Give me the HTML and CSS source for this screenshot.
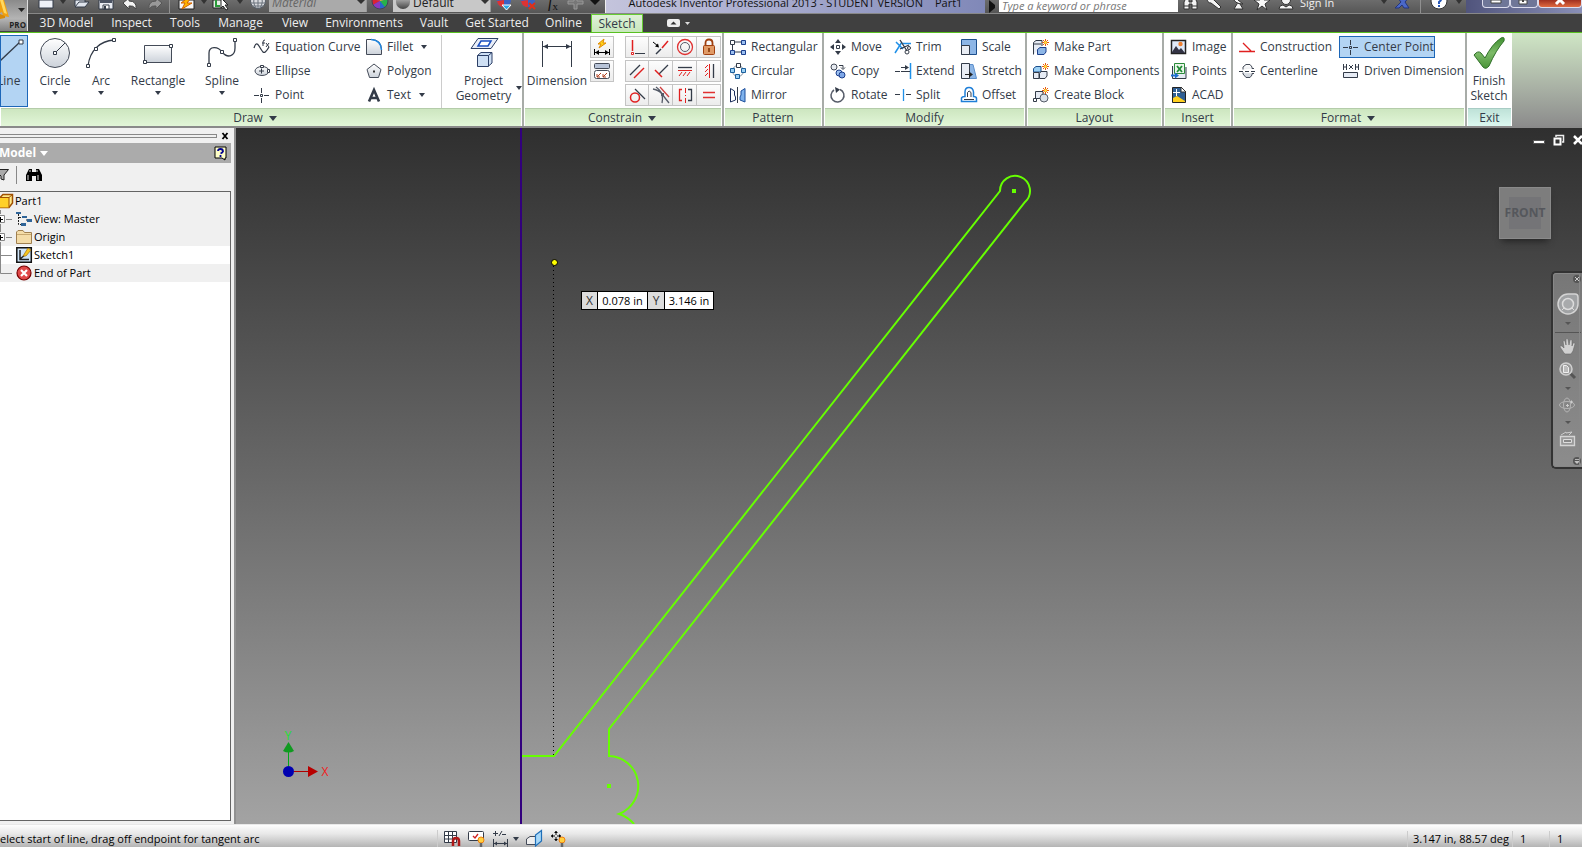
FILE: index.html
```html
<!DOCTYPE html>
<html lang="en">
<head>
<meta charset="utf-8">
<title>Autodesk Inventor Professional 2013 - STUDENT VERSION Part1</title>
<link rel="stylesheet" href="styles.css">
</head>
<body>
<div class="app">
<header class="header">
  <button class="logo" aria-label="Application menu">
    <svg width="28" height="31" viewBox="0 0 28 31"><path d="M0 0H4L9 17L3 16L2 12L0 13Z" fill="#f0a010"/><path d="M0 0H3L7 14L4 13Z" fill="#ffd860"/><path d="M0 14L5 16V18L0 19Z" fill="#d88a08"/><path d="M18 8h7l-3.500 4z" fill="#222"/></svg>
    <span class="pro">PRO</span>
  </button>
  <div class="titlebar">
    <div class="quick">
      <button class="q q20" aria-label="New"><svg width="16" height="9"><path d="M1 0H15V8H1Z" fill="#eef1f7" stroke="#333b48"/></svg></button>
      <button class="q q14 menu" aria-label="New options"></button>
      <button class="q q24" aria-label="Open"><svg width="18" height="9"><path d="M2 7L6 2H16L12 7ZM2 6V0H12V2" fill="#dfe4ec" stroke="#333b48"/></svg></button>
      <button class="q q24" aria-label="Save"><svg width="16" height="10"><path d="M1 0H15V9H1Z" fill="#e8ebf2" stroke="#333b48"/><path d="M2 0H14V3H2Z" fill="#4a5262"/><path d="M5 5H11V9H5Z" fill="#fff" stroke="#333b48"/><path d="M6 6h2v3h-2z" fill="#333b48"/></svg></button>
      <button class="q q24" aria-label="Undo"><svg width="17" height="10"><path d="M1 3L7-2V1Q15 1 14 9Q11 5 7 6V9Z" fill="#f4f4f4" stroke="#444"/></svg></button>
      <button class="q q24" aria-label="Redo"><svg width="17" height="10"><path d="M16 3L10-2V1Q2 1 3 9Q6 5 10 6V9Z" fill="#999" stroke="#555"/></svg></button>
      <span class="qsep"></span>
      <button class="q q26" aria-label="Update"><svg width="17" height="11"><path d="M1 0H16V9H1Z" fill="#f6f6f6" stroke="#222"/><path d="M11-3L3 3H7L4 9L14 3H9L13-2Z" fill="#ffb400" stroke="#d06000"/></svg></button>
      <button class="q q10 menu" aria-label="Update options"></button>
      <button class="q q24" aria-label="Select"><svg width="18" height="11"><path d="M1 0H12V8H1Z" fill="#e8eee8" stroke="#222"/><path d="M4 0V6H8" fill="none" stroke="#2a9a3a" stroke-width="2"/><path d="M9-2V8L11 6L14 10L16 9L13 5H16Z" fill="#fff" stroke="#222"/></svg></button>
      <button class="q q14 menu" aria-label="Select options"></button>
      <button class="q q22" aria-label="Appearance"><svg width="17" height="11"><circle cx="8" cy="1" r="7.500" fill="#d8dade" stroke="#555d66"/><path d="M1 3H15M3 6H13M5-4Q2 2 6 8M11-4Q14 2 10 8M8-5V8" stroke="#6a727c" fill="none"/></svg></button>
      <div class="combo dim"><select aria-label="Material"><option>Material</option></select><span class="tri"></span></div>
      <button class="q q26" aria-label="Color wheel"><svg width="18" height="11"><circle cx="9" cy="1" r="8" fill="#2a66cc"/><path d="M9 1L1 0A8 8 0 0 1 9-7Z" fill="#e43"/><path d="M9 1L2 5A8 8 0 0 1 1-1Z" fill="#d23"/><path d="M9 1L2 5Q5 9 9 9Z" fill="#8a3ac0"/><path d="M9 1L17-1Q17 5 14 7Z" fill="#27b24a"/><path d="M9 1L10-7Q16-5 17-1Z" fill="#f5b820"/><circle cx="9" cy="1" r="8" fill="none" stroke="#445"/></svg></button>
      <div class="combo"><i class="ball"></i><select aria-label="Appearance"><option>Default</option></select><span class="tri"></span></div>
      <button class="q q26" aria-label="Adjust"><svg width="17" height="11"><circle cx="8" cy="0" r="7" fill="#3b62c4"/><path d="M8 0L1 1Q2 7 8 7Z" fill="#d33"/><path d="M6 5H15L10.500 10Z" fill="#28a8e8" stroke="#fff"/></svg></button>
      <button class="q q24" aria-label="Clear"><svg width="18" height="11"><circle cx="8" cy="0" r="7" fill="#3b62c4"/><path d="M8 0L1 1Q2 7 8 7Z" fill="#d33"/><path d="M9 3L15 9M15 3L9 9" stroke="#e03018" stroke-width="2"/></svg></button>
      <button class="q q24 fx" aria-label="Parameters"><i>f</i><sub>x</sub></button>
      <button class="q q20" aria-label="Add"><svg width="17" height="10"><path d="M7-5H10V1H16V4H10V9H7V4H1V1H7Z" fill="#777" stroke="#999"/></svg></button>
      <button class="q q20 menu dark" aria-label="Customize"></button>
    </div>
    <div class="apptitle"><span>Autodesk Inventor Professional 2013 - STUDENT VERSION</span><span>Part1</span></div>
    <button class="play" aria-label="Search options"></button>
    <input class="search" aria-label="Search" placeholder="Type a keyword or phrase">
    <div class="info">
      <button class="q q24" aria-label="Search help"><svg width="17" height="11"><path d="M2 9V2L4-2H7V2H10V-2H13L15 2V9H10V4H7V9Z" fill="#f4f4f4" stroke="#333"/><path d="M2 6h5M10 6h5" stroke="#333"/></svg></button>
      <button class="q q24" aria-label="Subscription"><svg width="17" height="11"><path d="M1-2Q5-4 8 0L15 7L13 9L5 3Q1 3 1-2Z" fill="#f4f4f4" stroke="#333"/></svg></button>
      <button class="q q24" aria-label="Communication"><svg width="17" height="11"><path d="M3-3Q4 4 13 4L8 0L12-3M7 4L4 9H13L10 4" fill="#f4f4f4" stroke="#333"/></svg></button>
      <button class="q q24" aria-label="Favorites"><svg width="17" height="11"><path d="M8-6L10 0H16L11 4L13 10L8 6L3 10L5 4L0 0H6Z" fill="#f8f8f8" stroke="#333"/></svg></button>
      <button class="q q24" aria-label="Account"><svg width="17" height="11"><circle cx="8" cy="0" r="4.500" fill="#f4f4f4" stroke="#333"/><path d="M1 9Q1 5 5 5L8 7L11 5Q15 5 15 9Z" fill="#f4f4f4" stroke="#333"/></svg></button>
      <button class="signin">Sign In</button>
      <button class="q q14 menu" aria-label="Sign in options"></button>
      <button class="q q24" aria-label="Exchange apps"><svg width="17" height="11"><path d="M1-4H6L8-1L11-4H15L10 2L14 8H9L7 5L4 8H0L6 2Z" fill="#4a68c8" stroke="#24357a"/></svg></button>
      <span class="qsep wide"></span>
      <button class="q q26" aria-label="Help"><svg width="18" height="12"><circle cx="9" cy="1" r="8" fill="#fff" stroke="#333"/><path d="M6-1Q7-4 10-3Q13-1 9 2V4M9 5V7" fill="none" stroke="#2455b8" stroke-width="2"/></svg></button>
      <button class="q q14 menu" aria-label="Help options"></button>
    </div>
    <div class="winbtns">
      <button aria-label="Minimize"><svg width="12" height="5"><path d="M1 0h10v3H1z" fill="#fff" stroke="#444"/></svg></button>
      <button aria-label="Restore"><svg width="12" height="6"><path d="M1 0h8v4H1z" fill="#fff" stroke="#444"/><path d="M4 0h2v2H4z" fill="#444"/></svg></button>
      <button class="close" aria-label="Close"><svg width="12" height="6"><path d="M2 4L6 0M10 4L6 0" stroke="#fff" stroke-width="3"/></svg></button>
    </div>
  </div>
  <nav class="tabs">
    <button>3D Model</button><button>Inspect</button><button>Tools</button><button>Manage</button><button>View</button><button>Environments</button><button>Vault</button><button>Get Started</button><button>Online</button><button class="active">Sketch</button>
    <button class="collapse" aria-label="Minimize ribbon"><svg width="30" height="10"><rect x="4" y="1" width="13" height="8" rx="2" fill="#eee"/><path d="M7.500 6.500h6l-3-3z" fill="#333"/><path d="M22 4h5l-2.500 3z" fill="#ddd"/></svg></button>
  </nav>
</header>

<div class="ribbon">
  <section class="panel draw">
    <div class="pbody">
      <button class="big line on"><svg width="28" height="34"><path d="M0 25L20 6" stroke="#333b48" stroke-width="1.300"/><path d="M19 4h4v4h-4z" fill="#fff" stroke="#333b48"/></svg><span>Line</span></button>
      <button class="big circle drop"><svg width="32" height="34"><defs><linearGradient id="g" x2="0" y2="1"><stop stop-color="#fff"/><stop offset="1" stop-color="#ccd2da"/></linearGradient></defs><circle cx="16" cy="17" r="14.500" fill="url(#g)" stroke="#444b58"/><path d="M16 17L26 7" stroke="#333b48"/><path d="M14.500 15.500h3v3h-3z" fill="#fff" stroke="#333b48"/></svg><span>Circle</span></button>
      <button class="big arc drop"><svg width="34" height="34"><path d="M4 30C6 14 16 5 30 4" fill="none" stroke="#333b48" stroke-width="1.300"/><path d="M2.500 28.500h3v3h-3zM10.500 11.500h3v3h-3zM28.500 2.500h3v3h-3z" fill="#fff" stroke="#333b48"/></svg><span>Arc</span></button>
      <button class="big rect drop"><svg width="32" height="34"><path d="M2.500 9.500h27v17h-27z" fill="url(#g)" stroke="#444b58"/><path d="M1.500 24.500h3v3h-3zM27.500 8.500h3v3h-3z" fill="#fff" stroke="#333b48"/></svg><span>Rectangle</span></button>
      <button class="big spline drop"><svg width="34" height="34"><path d="M4 28V17C4 10 13 10 17 16C23 23 30 20 30 12V5" fill="none" stroke="#333b48" stroke-width="1.300"/><path d="M2.500 27.500h3v3h-3zM15.500 14.500h3v3h-3zM28.500 2.500h3v3h-3z" fill="#fff" stroke="#333b48"/></svg><span>Spline</span></button>
      <div class="list eq">
        <button><svg width="16" height="16"><path d="M0 9Q2 2 5 7T9 13Q11 15 15 8" fill="none" stroke="#333b48" stroke-width="1.300"/><path d="M9 7V3Q9 1 11 1M8 4H11M12 4L15 8M15 4L12 8" fill="none" stroke="#333b48"/></svg>Equation Curve</button>
        <button><svg width="16" height="16"><ellipse cx="8" cy="8" rx="7" ry="4.500" fill="url(#g)" stroke="#444b58"/><path d="M5 8h5M7.500 5.500v5" stroke="#333b48"/><path d="M6.500 2.500h3v2h-3zM13.500 6.500h2v3h-2z" fill="#fff" stroke="#333b48"/></svg>Ellipse</button>
        <button><svg width="16" height="16"><path d="M0 8.500h5M10 8.500h5M7.500 1v5M7.500 11v5M6.500 7.500h2v2h-2z" fill="none" stroke="#333b48"/></svg>Point</button>
      </div>
      <div class="list fil">
        <button class="dd"><svg width="16" height="16"><path d="M.5 15.500V.5H6Q15 1 15.500 10V15.500Z" fill="url(#g)" stroke="#444b58"/><path d="M5 .5Q15 1 15.500 11" fill="none" stroke="#1f86e0" stroke-width="1.500"/></svg>Fillet</button>
        <button><svg width="16" height="16"><path d="M8 1L15 6.500L12.500 14.500H3.500L1 6.500Z" fill="url(#g)" stroke="#444b58"/><path d="M7 7.500h2v2H7z" fill="#333"/></svg>Polygon</button>
        <button class="dd"><svg width="16" height="16"><path d="M3 14.500L8 3L13 14.500M5 11H11" fill="none" stroke="#333b48" stroke-width="2.600"/></svg>Text</button>
      </div>
      <button class="big project"><svg width="32" height="34"><path d="M3 12.500L10 2.500H30L23 12.500Z" fill="#e9eef8" stroke="#2c3f66"/><path d="M10 10L13 5H23L20 10Z" fill="#fff" stroke="#1a4fc0" stroke-width="1.500"/><path d="M9.500 19.500L13 16.500H24V27L20 30.500H9.500ZM9.500 19.500H20.500V30.500M20.500 19.500L24 16.500" fill="#cfe0f4" stroke="#2c3f66"/></svg><span>Project<br>Geometry</span></button>
    </div>
    <h2 class="more">Draw</h2>
  </section>

  <section class="panel constrain">
    <div class="pbody">
      <button class="big dimension"><svg width="32" height="34"><path d="M1.500 5V31M30.500 5V31M2 10.500H30" stroke="#333b48"/><path d="M2 10.500l5-2.500v5zM30 10.500l-5-2.500v5z" fill="#333b48"/></svg><span>Dimension</span></button>
      <div class="boxes one">
        <button aria-label="Auto dimension"><svg width="18" height="18"><path d="M11 1L5 6H8L6 10L13 5H10Z" fill="#ffd21a" stroke="#e08a00"/><path d="M1.500 11v6M16.500 11v6M2 14.500h14" stroke="#000"/><path d="M2 14.500l4-2.500v5zM16 14.500l-4-2.500v5z" fill="#000"/></svg></button>
        <button aria-label="Show constraints"><svg width="18" height="18"><rect x="1.500" y="1.500" width="15" height="5" rx="1" fill="#b8c4d8" stroke="#444b58"/><rect x="1.500" y="8.500" width="15" height="8" rx="2" fill="#fff" stroke="#444b58"/><path d="M4 15L8 11M4 12v3h3M10 15L14 11M10 12v3h3" stroke="#b04020" fill="none"/></svg></button>
      </div>
      <div class="boxes four">
        <button aria-label="Coincident"><svg width="18" height="18"><path d="M4.500 2v11" stroke="#e02020" stroke-width="1.500"/><path d="M7 15.500h10" stroke="#333b48"/><path d="M3.500 14.500h2v2h-2z" fill="#fff" stroke="#e02020"/></svg></button>
        <button aria-label="Collinear"><svg width="18" height="18"><path d="M4 16L9 11" stroke="#333b48" stroke-width="1.500"/><path d="M10 10L16 3" stroke="#e02020" stroke-width="1.500"/><path d="M1 4L6 8" stroke="#000"/><path d="M7 9.500L3 8.500L6 5.500Z"/></svg></button>
        <button aria-label="Concentric"><svg width="18" height="18"><circle cx="9" cy="9" r="7.500" fill="none" stroke="#e03030" stroke-width="1.300"/><circle cx="9" cy="9" r="4.500" fill="none" stroke="#555b68"/></svg></button>
        <button aria-label="Fix"><svg width="18" height="18"><path d="M5.500 8V5Q5.500 1.500 9 1.500T12.500 5V8" fill="none" stroke="#a04010" stroke-width="1.800"/><rect x="3.500" y="7.500" width="11" height="9" rx="1" fill="#e09a66" stroke="#a04010"/><path d="M9 10v4" stroke="#803000" stroke-width="1.500"/></svg></button>
        <button aria-label="Parallel"><svg width="18" height="18"><path d="M2 13L12 3" stroke="#333b48" stroke-width="1.300"/><path d="M6 16L16 6" stroke="#e02020" stroke-width="1.500"/></svg></button>
        <button aria-label="Perpendicular"><svg width="18" height="18"><path d="M7 12L16 3" stroke="#333b48" stroke-width="1.300"/><path d="M3 8L10 15" stroke="#e02020" stroke-width="1.500"/></svg></button>
        <button aria-label="Horizontal"><svg width="18" height="18"><path d="M2 5.500h14" stroke="#333b48" stroke-width="1.300"/><path d="M2 8.500h14M6 10l-3 4M10 10l-3 4M14 10l-3 4" stroke="#e02020"/></svg></button>
        <button aria-label="Vertical"><svg width="18" height="18"><path d="M13.500 2v14" stroke="#333b48" stroke-width="1.300"/><path d="M9.500 2v14M8 3l-3 3M8 7l-3 3M8 11l-3 3" stroke="#e02020"/></svg></button>
        <button aria-label="Tangent"><svg width="18" height="18"><circle cx="7" cy="11.500" r="4.500" fill="none" stroke="#e02020" stroke-width="1.500"/><path d="M7 3L17 13" stroke="#333b48" stroke-width="1.300"/></svg></button>
        <button aria-label="Smooth"><svg width="18" height="18"><path d="M1 3Q7 4 10 8T17 17M4 1Q9 5 10 8Q11 13 10 17" fill="none" stroke="#555b68" stroke-width="1.300"/><path d="M8 1L17 11" fill="none" stroke="#d04040" stroke-width="1.300"/><path d="M9 7h3v3H9z" fill="#555b68"/></svg></button>
        <button aria-label="Symmetric"><svg width="18" height="18"><path d="M6 3.500H3.500V14.500H6" fill="none" stroke="#e02020" stroke-width="1.300"/><path d="M9.500 2V7M9.500 9V10M9.500 12V17" stroke="#e02020"/><path d="M12 3.500H15.500V14.500H12" fill="none" stroke="#333b48" stroke-width="1.300"/></svg></button>
        <button aria-label="Equal"><svg width="18" height="18"><path d="M3 6.500h12M3 11.500h12" stroke="#e03030" stroke-width="1.300"/></svg></button>
      </div>
    </div>
    <h2 class="more">Constrain</h2>
  </section>

  <section class="panel pattern">
    <div class="pbody"><div class="list">
      <button><svg width="16" height="16"><path d="M5 3h6M2.500 5v6M5 13h6" stroke="#333b48"/><path d="M.5 1.500h4v4h-4z" fill="#fff" stroke="#333b48"/><path d="M11.500 1.500h4v4h-4zM.5 11.500h4v4h-4zM11.500 11.500h4v4h-4z" fill="#9cc0f0" stroke="#1c3f8c"/></svg>Rectangular</button>
      <button><svg width="16" height="16"><circle cx="8" cy="8" r="5.500" fill="none" stroke="#8090a0"/><path d="M6.500.5h4v4h-4z" fill="#fff" stroke="#333b48"/><path d="M.5 5.500h4v4h-4zM11.500 5.500h4v4h-4zM5.500 11.500h4v4h-4z" fill="#9cd0f4" stroke="#1c5f9c"/></svg>Circular</button>
      <button><svg width="16" height="16"><path d="M.5 15V1.500L4.500 4V8L5.500 10V13Z" fill="#fff" stroke="#1c2f5c"/><path d="M7.500 0V16" stroke="#333b48"/><path d="M15 15V1.500L11 4V8L10 10V13Z" fill="#7fb2ec" stroke="#1c4f9c"/></svg>Mirror</button>
    </div></div>
    <h2>Pattern</h2>
  </section>

  <section class="panel modify">
    <div class="pbody">
      <div class="list">
        <button><svg width="16" height="16"><path d="M8 0l3 4H5zM8 16l3-4H5zM0 8l4-3v6zM16 8l-4-3v6z" fill="#333b48"/><path d="M6.500 6.500h3v3h-3z" fill="#fff" stroke="#333b48"/></svg>Move</button>
        <button><svg width="16" height="16"><circle cx="4" cy="4" r="3" fill="#e6eaf0" stroke="#444b58"/><circle cx="9" cy="10" r="3" fill="#9cc0f0" stroke="#1c3f8c"/><circle cx="12" cy="12" r="3" fill="#7fa8e8" stroke="#1c3f8c"/><path d="M9 2.500h4v3M11 4.500l2 2 2-2" fill="none" stroke="#333b48"/></svg>Copy</button>
        <button><svg width="16" height="16"><path d="M10 2.500A6.500 6.500 0 1 1 4 3" fill="none" stroke="#555b68" stroke-width="1.500"/><path d="M5 0L10 2.500L6 6Z" fill="#333b48"/></svg>Rotate</button>
      </div>
      <div class="list">
        <button><svg width="16" height="16"><path d="M0 14L7 3M1 3L8 10M8 4.500H16" stroke="#1f90e8" stroke-width="1.500"/><path d="M5 1L12 12M14 6L5 10" stroke="#333b48" stroke-width="1.300"/><circle cx="12" cy="13" r="2" fill="none" stroke="#333b48"/><circle cx="14" cy="9" r="1.500" fill="none" stroke="#333b48"/></svg>Trim</button>
        <button><svg width="16" height="16"><path d="M15.500 0V16" stroke="#1f90e8" stroke-width="1.500"/><path d="M0 8.500h5M6 8.500h9M6 4.500h7" stroke="#333b48"/><path d="M14 4.500L10 2v5z" fill="#333b48"/></svg>Extend</button>
        <button><svg width="16" height="16"><path d="M0 7.500h5M11 7.500h5" stroke="#333b48"/><path d="M8.500 2v12" stroke="#1f90e8" stroke-width="1.300"/></svg>Split</button>
      </div>
      <div class="list">
        <button><svg width="16" height="16"><path d="M.5.5h15v15h-15z" fill="#8db6e6" stroke="#1c4f8c"/><path d="M.5 6.500h8v9h-8z" fill="#e9edf4" stroke="#333b48"/></svg>Scale</button>
        <button><svg width="16" height="16"><path d="M8 1.500h4L15.500 15.500H8z" fill="#8db6e6" stroke="#5c8fcc"/><path d="M.5.500h8v15h-8z" fill="#e9edf4" stroke="#333b48"/><path d="M4 11.500h6" stroke="#222"/><path d="M12 11.500L8 8.500v6z" fill="#222"/></svg>Stretch</button>
        <button><svg width="16" height="16"><path d="M.5 14.500V11Q1 9.500 4 9.500V5Q4 .5 8 .5T12.500 5V9.500Q15.500 9.500 15.500 11.500V14.500Z" fill="#fff" stroke="#1f7fd8" stroke-width="1.500"/><path d="M3 12.500H13M6.500 10V5.500Q8 2.500 10 5.500V10" fill="none" stroke="#333b48"/></svg>Offset</button>
      </div>
    </div>
    <h2>Modify</h2>
  </section>

  <section class="panel layout">
    <div class="pbody"><div class="list">
      <button><svg width="16" height="16"><path d="M.5 15.500V3.500L3 1.500H9V7M.5 5H8" fill="#e6ebf4" stroke="#333b48"/><path d="M4.500 10.500L7 8.500H13V13L11 15.500H4.500Z" fill="#8db6e6" stroke="#1c3f8c"/><path d="M12.500 0v7M9 3.500h7M10 1l5 5M15 1l-5 5" stroke="#e85a10"/><circle cx="12.500" cy="3.500" r="1.500" fill="#ffe040"/></svg>Make Part</button>
      <button><svg width="16" height="16"><path d="M.5 5.500L3 3.500H8V9H.5Z" fill="#9cd0f4" stroke="#1c4f8c"/><path d="M.5 9.500H6V15.500H.5Z" fill="#e6ebf4" stroke="#333b48"/><path d="M6.500 10.500L8 8.500H14V13L12 15.500H6.500Z" fill="#e6ebf4" stroke="#333b48"/><path d="M12.500 0v7M9 3.500h7M10 1l5 5M15 1l-5 5" stroke="#e85a10"/><circle cx="12.500" cy="3.500" r="1.500" fill="#ffe040"/></svg>Make Components</button>
      <button><svg width="16" height="16"><path d="M2.500 12V4.500H10V11.500H3" fill="#e6ebf4" stroke="#333b48"/><path d="M.5 11.500h3v3h-3z" fill="#fff" stroke="#333b48"/><circle cx="11" cy="11" r="4" fill="#dde2ea" stroke="#555b68"/><path d="M12.500 0v7M9 3.500h7M10 1l5 5M15 1l-5 5" stroke="#e85a10"/><circle cx="12.500" cy="3.500" r="1.500" fill="#ffe040"/></svg>Create Block</button>
    </div></div>
    <h2>Layout</h2>
  </section>

  <section class="panel insert">
    <div class="pbody"><div class="list">
      <button><svg width="16" height="16"><path d="M.5 1.500h14v13H.5z" fill="#dfe9f8" stroke="#222" stroke-width="1.500"/><circle cx="9.500" cy="5" r="2.200" fill="#f08030"/><path d="M1 13L5 7L8 11L10 9L14 14H1Z" fill="#334"/></svg>Image</button>
      <button><svg width="16" height="16"><path d="M1.500 3v12.500h13.500V4" fill="#e6ebf4" stroke="#333b48"/><path d="M3.500.5h10v10h-10z" fill="#eaf6ea" stroke="#2a8a3a"/><path d="M6 3l5 6M11 3l-5 6" stroke="#1f8a34" stroke-width="1.800"/><path d="M0 11.500h4v-2l4 3-4 3v-2H0z" fill="#1f70d0"/></svg>Points</button>
      <button><svg width="16" height="16"><path d="M1.500.5h9l4 4v11h-13z" fill="#2f5f94" stroke="#222"/><path d="M2 11L6 9L14 14V15H2Z" fill="#ffd020"/><path d="M10 0l5 5h-5z" fill="#fff" stroke="#333"/><path d="M5.500 2v7M2 5.500h7" stroke="#fff"/></svg>ACAD</button>
    </div></div>
    <h2>Insert</h2>
  </section>

  <section class="panel format">
    <div class="pbody">
      <div class="list">
        <button><svg width="16" height="16"><path d="M0 12.500h16M4 4l8 8" fill="none" stroke="#e02020" stroke-width="1.300"/></svg>Construction</button>
        <button><svg width="16" height="16"><path d="M4 6.500V4L7 1.500H11L13 4V5.500H15M4 9.500V11L7 14.500H11L13 12V10.500H15" fill="url(#g)" stroke="#444b58"/><path d="M0 8.500h4M6 8.500h4M12 8.500h4" stroke="#333b48"/></svg>Centerline</button>
      </div>
      <div class="list second">
        <button class="on"><svg width="16" height="16"><path d="M0 8.500h5M10 8.500h5M7.500 1v5M7.500 11v5M6.500 7.500h2v2h-2z" fill="none" stroke="#333b48"/></svg>Center Point</button>
        <button><svg width="16" height="16"><path d="M.5 1v6M.5 4h3M3.500 1v6M12.500 1v6M12.500 4h3M15.500 1v6M6 2l4 4M10 2l-4 4" fill="none" stroke="#333b48"/><path d="M.5 9.500h14v5H.5z" fill="#e6ebf4" stroke="#333b48"/></svg>Driven Dimension</button>
      </div>
    </div>
    <h2 class="more">Format</h2>
  </section>

  <section class="panel exit">
    <div class="pbody">
      <button class="big"><svg width="34" height="34"><defs><linearGradient id="k" x2="0" y2="1"><stop stop-color="#3f8f30"/><stop offset=".5" stop-color="#7dbb68"/><stop offset="1" stop-color="#4a9438"/></linearGradient></defs><path d="M2 19Q6 14 9 17L13 22Q20 8 29 2Q33 0 32 5Q24 14 17 30Q14 34 11 31Z" fill="url(#k)" stroke="#2f6f28"/></svg><span>Finish<br>Sketch</span></button>
    </div>
    <h2>Exit</h2>
  </section>
</div>

<main class="work">
  <aside class="browser">
    <div class="grip"><i></i><button aria-label="Close browser"><svg width="8" height="8"><path d="M1.500 1l5 6M6.500 1l-5 6" stroke="#000" stroke-width="1.800"/></svg></button></div>
    <div class="mhead"><button class="model">Model</button><button aria-label="Help"><svg width="14" height="15"><path d="M1 1h11v11h-1v2l-3-2H1z" fill="#ffffc8" stroke="#000"/><path d="M4 5Q4 3 6.500 3T9 5.500Q8 7 6.500 7.500M6.500 9v2" fill="none" stroke="#000090" stroke-width="1.800"/></svg></button></div>
    <div class="mtools">
      <button aria-label="Filter"><svg width="10" height="16"><path d="M0 2.500H8.500L4 8V13L1 12V9L0 8" fill="#aaa" stroke="#222"/></svg></button>
      <i></i>
      <button aria-label="Find"><svg width="16" height="16"><path d="M0 14V8L3 2H6V5H10V2H13L16 8V14H10V9H6V14Z"/><path d="M2 13V8M12 13V8M4 3v2M11 3v2" stroke="#ddd"/></svg></button>
    </div>
    <ul class="tree">
      <li class="root"><svg width="14" height="16"><path d="M0 4.500L3 1.500H12.500V10L9 14.500H0" fill="#ffe98a" stroke="#a05000" stroke-width="1.500"/><path d="M0 4.500H9V14.500H0Z" fill="#ffd028"/><path d="M0 4.500H9V14.500M9 4.500L12.500 1.500" fill="none" stroke="#a05000"/></svg>Part1</li>
      <li><svg class="twig" width="15" height="18"><path d="M.5 0V4M.5 14V18M6 9.500H12" stroke="#888"/><path d="M-1 5.500H4.500V12.500H-1" fill="#fff" stroke="#888"/><path d="M0 9.500H3M.5 7V12" stroke="#000"/></svg><svg width="17" height="16"><path d="M2.500 3V13.500H6M3 6.500H6M10 9h2" fill="none" stroke="#222" stroke-dasharray="2 1"/><path d="M0 1h5v2H0zM6 5h5v2H6zM11 8h5v3h-5zM5 12h5v3H5z" fill="#2f6498"/></svg>View: Master</li>
      <li><svg class="twig" width="15" height="18"><path d="M.5 0V4M.5 14V18M6 9.500H12" stroke="#888"/><path d="M-1 5.500H4.500V12.500H-1" fill="#fff" stroke="#888"/><path d="M0 9.500H3M.5 7V12" stroke="#000"/></svg><svg width="17" height="16"><path d="M.5 14.500V3L2 1.500H7L8.500 3.500H15.500V14.500Z" fill="#f4dca8" stroke="#a08050"/><path d="M1 5.500H15" stroke="#c8a870"/></svg>Origin</li>
      <li class="sel"><svg class="twig" width="15" height="18"><path d="M.5 0V18M1 9.500H12" stroke="#888"/></svg><svg width="17" height="16"><path d="M.8.8h14.500v14.500H.8z" fill="#cfe4f8" stroke="#111" stroke-width="1.500"/><path d="M4 3V12.500H13M4 12L9 8" fill="none" stroke="#222" stroke-width="1.500"/><path d="M7 9L12 1L15 3L10 9Z" fill="#f8c820" stroke="#a07010" stroke-width=".7"/></svg>Sketch1</li>
      <li><svg class="twig" width="15" height="18"><path d="M.5 0V9.500H12" fill="none" stroke="#888"/></svg><svg width="17" height="16"><circle cx="8" cy="8" r="7" fill="#e04848" stroke="#700" stroke-width="1.200"/><path d="M5 5l6 6M11 5l-6 6" stroke="#fff" stroke-width="2.200"/></svg>End of Part</li>
    </ul>
  </aside>

  <div class="canvas">
    <svg class="sketch">
      <g transform="translate(-236 -128)">
        <path d="M521 128V824" stroke="#32007d" stroke-width="2"/>
        <path d="M553.500 266V756" stroke="#000" stroke-dasharray="1 3"/>
        <g fill="none" stroke="#66ff00" stroke-width="2">
          <path d="M522 756H554L1000 191A15 15 0 1 1 1025 202L609 729V756A30 30 0 0 1 619 814Q628 817 634 824"/>
        </g>
        <path d="M1012 189h4v4h-4zM607 784h4v4h-4z" fill="#6f0"/>
        <circle cx="554.500" cy="262.500" r="3" fill="#ff0" stroke="#000"/>
        <path d="M288.500 766V752" stroke="#00a818"/><path d="M288.500 742L294 751Q288.500 754 283 751Z" fill="#109a20"/>
        <path d="M294 771.500H308" stroke="#b00000"/><path d="M318 771.500L308 777V766Z" fill="#b80000"/>
        <circle cx="288.500" cy="771.500" r="5.500" fill="#0000b0"/>
        <text x="288" y="740" class="ay">Y</text><text x="325" y="776" class="ax">X</text>
      </g>
    </svg>
    <div class="mdi">
      <button aria-label="Minimize document"><svg width="14" height="12"><path d="M1.500 6.500h11v3h-11z" fill="#fff" stroke="#555"/></svg></button>
      <button aria-label="Restore document"><svg width="14" height="12"><path d="M4 3V1.500H11.500V8H10" fill="none" stroke="#eee" stroke-width="1.500"/><path d="M2.500 4.500h6v6h-6z" fill="#333" stroke="#fff" stroke-width="2"/></svg></button>
      <button aria-label="Close document"><svg width="12" height="12"><path d="M2 2l8 8M10 2l-8 8" stroke="#fff" stroke-width="2.500"/></svg></button>
    </div>
    <div class="coords">
      <label for="cx">X</label><input id="cx" value="0.078 in"><label for="cy">Y</label><input id="cy" value="3.146 in">
    </div>
    <button class="cube">FRONT</button>
    <div class="navbar">
      <button class="end" aria-label="Close navigation bar"><svg width="10" height="10"><circle cx="5" cy="5" r="4" fill="#555"/><path d="M3 3l4 4M7 3l-4 4" stroke="#ccc"/></svg></button>
      <button class="wheel" aria-label="Steering wheel"><svg width="22" height="22"><path d="M11 1H18Q21 1 21 4V11A10 10 0 1 1 11 1Z" fill="#a0a2a4" stroke="#d4d4d4" stroke-width="1.500"/><circle cx="11" cy="11" r="5.500" fill="#a8aaac" stroke="#dcdcdc" stroke-width="1.500"/><path d="M5 17l2-2M17 17l-2-2" stroke="#ddd"/></svg></button>
      <button class="nt" aria-label="Wheel options"></button>
      <button class="pan" aria-label="Pan"><svg width="17" height="17"><path d="M5 15L1 9Q1 7 3 8L5 10L4 3Q5 2 6 3L7 7V1Q8 0 9 1L10 7L11 2Q12 1 13 2V8L14 5Q16 4 16 6L14 13L12 16H6Z" fill="#d0d0d0" stroke="#666" stroke-width=".6"/></svg></button>
      <button class="zoom" aria-label="Zoom"><svg width="17" height="17"><path d="M10 10l6 6" stroke="#555" stroke-width="3"/><circle cx="7" cy="7" r="6" fill="#999" stroke="#d0d0d0" stroke-width="1.500"/><path d="M4.500 3.500h3l2 2v5h-5z" fill="#bbb" stroke="#eee"/></svg></button>
      <button class="nt" aria-label="Zoom options"></button>
      <button class="orbit" aria-label="Orbit"><svg width="17" height="17"><ellipse cx="8" cy="8" rx="3.500" ry="7" fill="none" stroke="#b4b4b4"/><ellipse cx="8" cy="8" rx="7.500" ry="3.500" fill="none" stroke="#b4b4b4"/><path d="M7 8.500h3M8.500 7v3M11 5h3M12.500 3.500v3" stroke="#ccc"/></svg></button>
      <button class="nt" aria-label="Orbit options"></button>
      <button class="look" aria-label="Look at"><svg width="17" height="17"><path d="M1.500 5.500h14v9h-14z" fill="#999" stroke="#d4d4d4" stroke-width="1.300"/><path d="M4.500 8.500h8v3h-8z" fill="#888" stroke="#ddd"/><path d="M2 4L7 1V2L13 1L10 4" fill="none" stroke="#ccc"/></svg></button>
      <button class="end last" aria-label="Customize navigation bar"><svg width="10" height="10"><circle cx="5" cy="5" r="4" fill="#555"/><path d="M3 3.500h4M3 5.500h4l-2 2z" stroke="#ccc" fill="#ccc" stroke-width=".8"/></svg></button>
    </div>
  </div>
</main>

<footer class="status">
  <span class="prompt">Select start of line, drag off endpoint for tangent arc</span>
  <div class="stools">
    <button aria-label="Snap to grid"><svg width="17" height="17"><path d="M.5 1.500h12v11H.5zM4.500 1v12M8.500 1v12M0 5.500h13M0 9h13" fill="#fff" stroke="#333b48"/><path d="M9 16V11Q9 8 12 8T15 11V16" fill="none" stroke="#b01818" stroke-width="2.500"/></svg></button>
    <button aria-label="Show constraints"><svg width="17" height="17"><rect x=".5" y="1.500" width="15" height="9" rx="1" fill="#fff" stroke="#333b48"/><path d="M5 6l2 2 3-4" fill="none" stroke="#d02020" stroke-width="1.300"/><circle cx="13" cy="10" r="3" fill="#ffd040" stroke="#f08010"/><path d="M13 13v4" stroke="#666" stroke-width="2.500"/></svg></button>
    <button class="dd" aria-label="Dimension display"><svg width="17" height="17"><path d="M1.500 9v8M15.500 9v8M2 13.500h13M1 3.500h5M3.500 1v5M7 6l3-5M10 4.500h4" stroke="#333b48"/><path d="M2 13.500l3-2v4zM15 13.500l-3-2v4z" fill="#333b48"/></svg></button>
    <button aria-label="Slice graphics"><svg width="17" height="17"><path d="M.5 14.500V9L4 6.500H10V14.500Z" fill="#eee" stroke="#444b58"/><path d="M9.500 16V5L15.500 .5V11Z" fill="#a8d8f8" stroke="#1f6fb8" stroke-width="1.200"/></svg></button>
    <button aria-label="Degrees of freedom"><svg width="17" height="17"><path d="M1 6h10M6 1v10" stroke="#111" stroke-dasharray="4 2"/><path d="M6 1l2 2h-4zM6 11l2-2h-4zM1 6l2-2v4zM11 6l-2-2v4z"/><circle cx="12" cy="10" r="3" fill="#ffd040" stroke="#f08010"/><path d="M12 13v4" stroke="#666" stroke-width="2.500"/></svg></button>
  </div>
  <output class="pos">3.147 in, 88.57 deg</output>
  <span class="n1">1</span>
  <span class="n2">1</span>
</footer>
</div>
</body>
</html>
```
FILE: styles.css
```css
* { box-sizing: border-box; }
body { margin: 0; padding-right: 9px; background: #fff; font: 12px/16px "Open Sans", "Noto Sans", sans-serif; color: #333b48; }
button { margin: 0; padding: 0; border: 0; background: none; font: inherit; color: inherit; white-space: nowrap; }
svg { display: block; flex: none; overflow: visible; }
.app { display: flex; flex-direction: column; height: 100vh; overflow: hidden; }

/* Title bar and tabs */
.header { display: grid; grid-template-columns: 28px 1fr; grid-template-rows: 14px 18px; background: #404040; border-bottom: 1px solid #58c020; height: 33px; flex: none; }
.logo { grid-row: 1 / 3; height: 31px; background: linear-gradient(#8a8a8a, #b4b4b4 60%, #808080); border-right: 1px solid #ddd; display: grid; overflow: hidden; }
.logo > * { grid-area: 1 / 1; }
.pro { align-self: end; justify-self: end; font-size: 8px; font-weight: 700; line-height: 12px; padding-right: 2px; color: #222; }
.titlebar { display: flex; min-width: 0; overflow: hidden; background: linear-gradient(#6c6c6c, #565656); border-bottom: 1px solid #888; }
.quick, .info { display: flex; }
.quick { padding-left: 8px; }
.q { display: flex; justify-content: center; align-items: flex-start; height: 14px; }
.q10 { width: 10px; } .q14 { width: 14px; } .q20 { width: 20px; } .q22 { width: 22px; } .q24 { width: 24px; } .q26 { width: 26px; }
.menu::before { content: ""; border: 3px solid transparent; border-top: 4px solid #333; border-bottom: 0; }
.menu.dark::before { border-width: 5px 5px 0; border-top-color: #111; }
.qsep { width: 1px; background: #909090; margin: 0 3px; }
.qsep.wide { margin: 0 5px; }
.combo { display: flex; width: 98px; height: 12px; align-items: flex-end; background: #c8c8c8; border-right: 1px solid #999; }
.combo select { flex: 1; min-width: 0; appearance: none; border: 0; background: none; font: inherit; line-height: 16px; height: 16px; margin-bottom: 1px; padding: 0 3px; color: #222; }
.dim { background: #aaa; }
.dim select { font-style: italic; color: #666; }
.ball { width: 14px; height: 10px; margin: 0 0 3px 3px; border-radius: 0 0 7px 7px; background: linear-gradient(#aaa, #444); }
.tri { align-self: start; margin-right: 1px; border: 4px solid transparent; border-top: 4px solid #333; border-bottom: 0; }
.fx { align-items: flex-end; padding-bottom: 4px; font-size: 16px; color: #111; font-family: "Liberation Serif", serif; }
.fx sub { font-size: 11px; line-height: 8px; }
.apptitle { flex: 0 1 380px; display: flex; justify-content: center; align-items: flex-end; gap: 12px; padding-bottom: 2px; background: linear-gradient(90deg, #c4c4dc, #a4a8cc 50%, #8088b8); color: #111; font-size: 11px; white-space: nowrap; overflow: hidden; border-left: 1px solid #eee; }
.play { width: 14px; display: flex; justify-content: center; }
.play::before { content: ""; border: 5px solid transparent; border-left: 6px solid #111; border-right: 0; }
.search { flex: 0 1 179px; min-width: 0; height: 12px; border: 0; padding: 0 3px; background: #fff; font: italic 11px/12px "Open Sans", "Noto Sans", sans-serif; }
.search::placeholder { color: #777; }
.info { flex: 1; color: #f0f0f0; }
.signin { align-self: flex-end; height: 16px; padding: 0 2px; margin-bottom: 2px; margin-right: auto; font-size: 11px; }
.winbtns { flex: none; width: 116px; display: flex; padding-left: 16px; background: linear-gradient(90deg, #50547c, #8a90b8); }
.winbtns button { width: 28px; height: 8px; display: flex; justify-content: center; background: #6f7698; border: 1px solid #dde; border-top: 0; border-radius: 0 0 4px 4px; }
.winbtns .close { flex: 1; background: linear-gradient(#a03020, #e06a40); }
.tabs { display: grid; grid-template-columns: 71px 59px 48px 63px 46px 92px 48px 78px 55px 52px 50px; padding-left: 3px; align-items: stretch; color: #eee; line-height: 16px; }
.tabs .active { background: linear-gradient(#dff0d8, #c8e8bc); border: 1px solid #6c3; border-bottom: 0; color: #333b48; }
.collapse { display: flex; align-items: center; justify-content: flex-end; }

/* Ribbon */
.ribbon { display: flex; flex: none; background: linear-gradient(#cfe6c5, #a8b0a4 60%, #8c8c8c); border-bottom: 2px solid #8a8a8a; height: 95px; }
.panel { display: flex; flex-direction: column; background: #fff; border-right: 2px solid #a8aca8; }
.pbody { display: flex; height: 75px; padding-top: 2px; }
.panel h2 { margin: 0 1px; height: 18px; font: inherit; line-height: 17px; text-align: center; background: linear-gradient(#cde6c0, #e2f6d8); border-top: 1px solid #b4ccaa; }
.more::after, .dd::after { content: ""; display: inline-block; border: 4px solid transparent; border-top: 5px solid #333b48; border-bottom: 0; margin-left: 6px; vertical-align: 1px; }
.panel .more { padding-right: 2px; }
.dd::after { border-width: 4px 3px 0; }
.draw { width: 524px; } .constrain { width: 200px; } .pattern { width: 100px; } .modify { width: 203px; }
.panel.draw h2 { padding-right: 12px; }
.layout { width: 137px; } .insert { width: 69px; } .format { width: 234px; } .exit { width: 45px; border: 0; }
.exit h2 { background: linear-gradient(#bfe2d8, #dcf8f0); border-color: #a8ccc4; }
.big { display: flex; flex-direction: column; align-items: center; gap: 3px; height: 72px; line-height: 15px; padding-top: 1px; }
.drop::after { content: ""; border: 3px solid transparent; border-top: 4px solid #333b48; border-bottom: 0; }
.on { background: #b3d4f3; outline: 1px solid #1c66b8; outline-offset: -1px; }
.line { width: 28px; align-items: flex-start; } .line span { margin-left: -3px; }
.circle { width: 54px; } .arc { width: 38px; } .rect { width: 76px; } .spline { width: 52px; }
.list { display: grid; grid-template-rows: repeat(3, 24px); align-content: start; padding-left: 6px; }
.list button { display: flex; align-items: center; gap: 5px; text-align: left; }
.list .dd::after { margin-left: 3px; }
.eq { width: 112px; } .fil { width: 82px; border-right: 1px solid #ccc; }
.project { width: 80px; padding-left: 3px; position: relative; }
.project::after { content: ""; position: absolute; right: 0; top: 51px; border: 3px solid transparent; border-top: 4px solid #333b48; border-bottom: 0; }
.dimension { width: 66px; }
.boxes { display: grid; grid-auto-rows: 22px; gap: 2px 0; align-content: start; padding-top: 1px; }
.boxes button { display: grid; place-items: center; border: 1px solid #c4c4c4; background: linear-gradient(#fdfdfd, #ececec); }
.one { grid-template-columns: 24px; margin-right: 11px; }
.four { grid-template-columns: repeat(4, 24px); }
.four button + button { border-left-width: 0; }
.four button:nth-child(4n + 1) { border-left-width: 1px; }
.modify .list { width: 65px; } .modify .list + .list { width: 66px; }
.insert .list { padding-left: 7px; }
.format .list { width: 106px; }
.format .second { width: 126px; padding-left: 0; grid-template-rows: 22px 24px; row-gap: 1px; padding-top: 1px; }
.second button { padding-left: 4px; width: 120px; }
.second .on { width: 96px; }
.exit .big { width: 44px; }

/* Model browser */
.work { display: flex; flex: 1; min-height: 0; }
.browser { width: 236px; flex: none; display: flex; flex-direction: column; background: #f0f0f0; border-right: 2px solid #909090; padding: 0 3px 3px 0; color: #000; }
.grip { display: flex; align-items: center; gap: 4px; height: 15px; padding-right: 2px; }
.grip i { flex: 1; height: 4px; border: 1px solid #888; border-left: 0; }
.mhead { display: flex; align-items: center; justify-content: space-between; height: 20px; background: #ababab; padding-right: 3px; }
.model { color: #fff; font-size: 12px; font-weight: 700; margin-left: -1px; display: flex; align-items: center; gap: 4px; }
.model::after { content: ""; border: 4px solid transparent; border-top: 5px solid #fff; border-bottom: 0; }
.mtools { display: flex; align-items: center; height: 28px; padding-bottom: 4px; }
.mtools i { width: 1px; height: 18px; background: #888; margin: 0 9px 0 6px; }
.tree { flex: 1; list-style: none; margin: 0; padding: 0; background: #fff; border: 1px solid #646464; border-left: 0; font: 11px/18px "Open Sans", "Noto Sans", sans-serif; }
.tree li { display: flex; align-items: center; height: 18px; gap: 1px; background: #f0f0f0; }
.tree .sel { background: #fff; }

/* Drawing canvas */
.canvas { position: relative; flex: 1; min-width: 0; overflow: hidden; background: linear-gradient(#2f2f2f, #686868 50%, #a3a3a3); }
.sketch { position: absolute; inset: 0; width: 100%; height: 100%; }
.ay, .ax { font: 12px "Open Sans", sans-serif; text-anchor: middle; }
.ay { fill: #20e030; } .ax { fill: #f02020; }
.mdi { position: absolute; top: 6px; right: -2px; display: flex; gap: 6px; }
.coords { position: absolute; left: 345px; top: 163px; display: grid; grid-template-columns: 15px 49px 16px 48px; gap: 1px; border: 1px solid #000; background: #000; height: 19px; color: #333; }
.coords label { background: #dcdcdc; text-align: center; line-height: 17px; }
.coords input { min-width: 0; border: 0; padding: 0; text-align: center; background: #fff; color: #000; font: 11px/17px "Open Sans", "Noto Sans", sans-serif; }
.cube { position: absolute; right: 31px; top: 59px; width: 52px; height: 52px; border: 1px solid #8a8a8a; background: linear-gradient(#747477, #747477) center / 32px 32px no-repeat #7d7d7d; color: #55575c; font-size: 12px; font-weight: 700; box-shadow: 0 5px 7px -3px #222; }
.navbar { position: absolute; right: 0; top: 143px; width: 31px; height: 198px; display: flex; flex-direction: column; align-items: center; background: linear-gradient(#777, #8c8c8c); border: 2px solid #333; border-right: 0; border-radius: 5px 0 0 5px; outline: 1px solid #888; outline-offset: -3px; }
.end { align-self: flex-end; height: 12px; display: flex; align-items: center; }
.last { margin-top: auto; }
.wheel { margin-top: 8px; }
.nt { width: 26px; height: 9px; display: flex; justify-content: center; align-items: center; }
.nt::before { content: ""; border: 3px solid transparent; border-top: 3px solid #555; border-bottom: 0; }
.wheel + .nt { height: 18px; border-bottom: 1px solid #555; }
.pan { margin: 5px 0 7px; } .zoom { margin-bottom: 5px; } .orbit { margin: 4px 0; } .look { margin-top: 4px; }

/* Status bar */
.status { display: flex; flex: none; height: 23px; align-items: center; color: #000; font-size: 11px; background: linear-gradient(#fdfdfd, #e8e8e8 40%, #b4b4b4); border-top: 1px solid #e8e8e8; padding-top: 5px; }
.prompt { margin-left: -6px; width: 443px; white-space: nowrap; }
.stools { display: flex; align-items: center; gap: 7px; padding-left: 6px; border-left: 1px solid #ccc; margin-right: auto; }
.stools button { display: flex; align-items: center; }
.stools .dd::after { margin-left: 4px; }
.pos, .n1, .n2 { border-left: 1px solid #ccc; padding-left: 5px; white-space: nowrap; }
.pos { width: 105px; } .n1 { width: 37px; padding-left: 7px; } .n2 { width: 33px; padding-left: 7px; }
```
